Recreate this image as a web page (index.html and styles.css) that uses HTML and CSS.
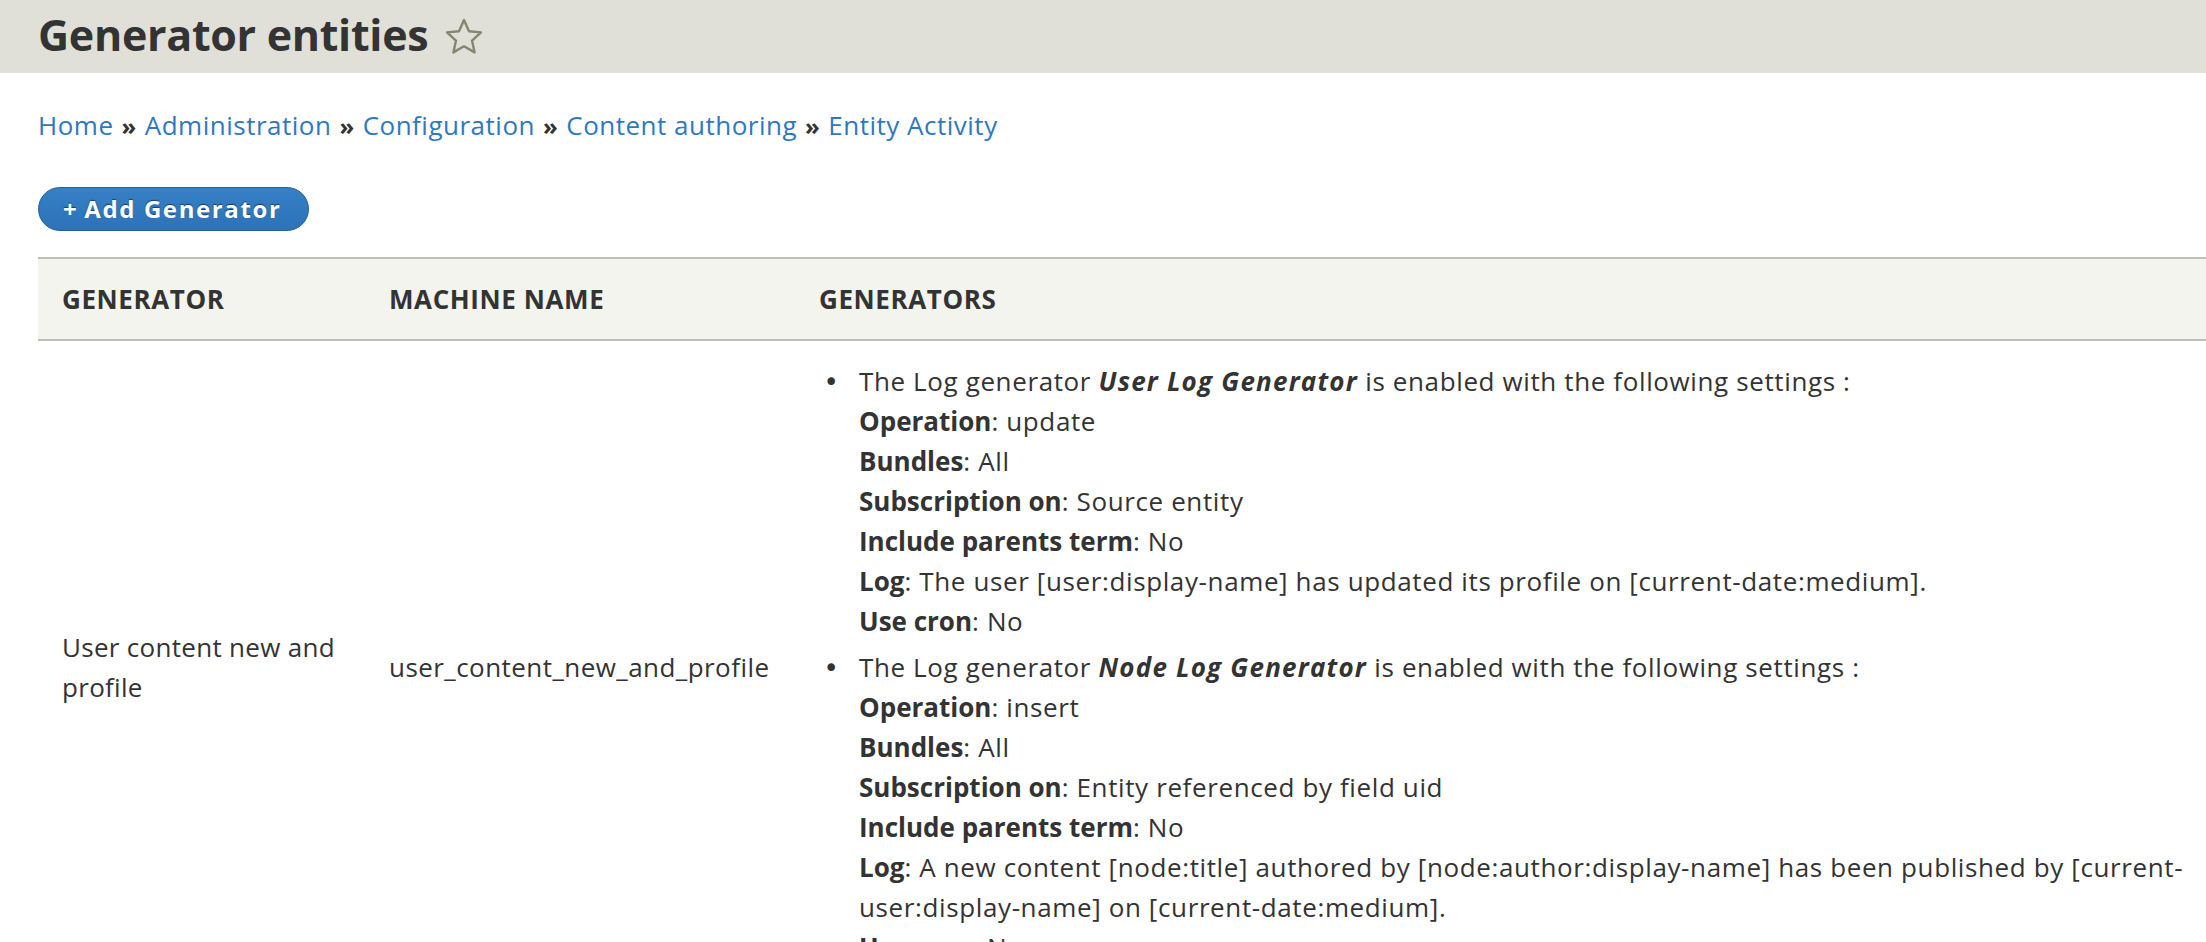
FILE: index.html
```html
<!DOCTYPE html>
<html lang="en">
<head>
<meta charset="utf-8">
<title>Generator entities</title>
<link rel="stylesheet" href="styles.css">
</head>
<body>
<header class="page-header">
  <h1 class="page-title">Generator entities
    <svg class="shortcut-star" viewBox="0 0 40 38" width="40" height="38" aria-hidden="true">
      <polygon points="20,3 25,14.2 37,15.4 28,23.6 30.6,35.4 20,29.3 9.4,35.4 12,23.6 3,15.4 15,14.2" fill="none" stroke="#86866f" stroke-width="2.4" stroke-linejoin="round"/>
    </svg>
  </h1>
</header>
<main class="content">
  <nav class="breadcrumb">
    <a href="#">Home</a><span class="sep">»</span><a href="#">Administration</a><span class="sep">»</span><a href="#">Configuration</a><span class="sep">»</span><a href="#">Content authoring</a><span class="sep">»</span><a href="#">Entity Activity</a>
  </nav>
  <div class="actions">
    <a class="button button-primary" href="#"><span class="plus">+</span>Add Generator</a>
  </div>
  <table class="listing">
    <colgroup>
      <col class="col-name">
      <col class="col-machine">
      <col class="col-gen">
    </colgroup>
    <thead>
      <tr>
        <th>Generator</th>
        <th>Machine name</th>
        <th>Generators</th>
      </tr>
    </thead>
    <tbody>
      <tr>
        <td class="cell-name">User content new and profile</td>
        <td class="cell-machine">user_content_new_and_profile</td>
        <td>
          <ul class="gen-list">
            <li>The Log generator <em class="gen-name">User Log Generator</em> is enabled with the following settings :<br>
              <strong>Operation</strong>: update<br>
              <strong>Bundles</strong>: All<br>
              <strong>Subscription on</strong>: Source entity<br>
              <strong>Include parents term</strong>: No<br>
              <strong>Log</strong>: The user [user:display-name] has updated its profile on [current-date:medium].<br>
              <strong>Use cron</strong>: No</li>
            <li>The Log generator <em class="gen-name">Node Log Generator</em> is enabled with the following settings :<br>
              <strong>Operation</strong>: insert<br>
              <strong>Bundles</strong>: All<br>
              <strong>Subscription on</strong>: Entity referenced by field uid<br>
              <strong>Include parents term</strong>: No<br>
              <strong>Log</strong>: A new content [node:title] authored by [node:author:display-name] has been published by [current-user:display-name] on [current-date:medium].<br>
              <strong>Use cron</strong>: No</li>
          </ul>
        </td>
      </tr>
    </tbody>
  </table>
</main>
</body>
</html>
```

FILE: styles.css
```css
html, body {
  overflow: hidden;
}
body {
  margin: 0;
  background: #ffffff;
  color: #333333;
  font-family: "Open Sans", "DejaVu Sans", sans-serif;
  font-size: 26px;
  line-height: 40px;
  letter-spacing: 0.62px;
}
.page-header {
  background: #e0e0d8;
  height: 73px;
  padding: 0 38px;
  box-sizing: border-box;
}
.page-title {
  margin: 0;
  font-size: 43px;
  line-height: 70px;
  font-weight: 700;
  letter-spacing: -0.3px;
  color: #333333;
  display: flex;
  align-items: center;
  gap: 16px;
}
.shortcut-star {
  display: block;
  margin-top: 1px;
}
.content {
  padding: 0 0 0 38px;
}
.breadcrumb {
  margin-top: 32px;
  color: #333333;
  letter-spacing: 0.5px;
}
.breadcrumb a {
  color: #2f78c1;
  text-decoration: none;
}
.breadcrumb .sep {
  padding: 0 8px;
  font-weight: 700;
  font-size: 24px;
}
.actions {
  margin-top: 41px;
}
.button {
  display: inline-block;
  box-sizing: border-box;
  height: 44px;
  line-height: 42px;
  padding: 0 27px 0 24px;
  border: 1px solid #255f98;
  border-radius: 22px;
  background: linear-gradient(#3680c6, #2c72b9);
  color: #ffffff;
  font-size: 24px;
  font-weight: 700;
  letter-spacing: 1.6px;
  text-decoration: none;
  text-shadow: 0 -1px 1px rgba(0, 0, 0, 0.5);
}
.button .plus {
  padding-right: 6px;
  font-weight: 700;
}
.listing {
  margin-top: 26px;
  width: 100%;
  border-collapse: collapse;
  table-layout: fixed;
}
.col-name { width: 327px; }
.col-machine { width: 430px; }
.listing thead tr {
  background: #f3f4ee;
  border-top: 2px solid #bfbfba;
  border-bottom: 2px solid #bfbfba;
}
.listing th {
  height: 80px;
  padding: 0 24px;
  text-align: left;
  text-transform: uppercase;
  font-weight: 700;
  letter-spacing: 0.6px;
  color: #333333;
}
.listing td {
  padding: 20px 24px;
  vertical-align: middle;
}
.listing td:last-child {
  padding-right: 16px;
}
.cell-name {
  letter-spacing: 0.3px;
}
.cell-machine {
  letter-spacing: 0.45px;
}
.gen-list {
  margin: 0;
  padding-left: 40px;
}
.gen-list li {
  margin-bottom: 6px;
}
.gen-list li::marker {
  content: "\2022\2002\2009";
  font-family: "DejaVu Sans", sans-serif;
  font-size: 26px;
}
.gen-list strong {
  letter-spacing: 0;
}
.gen-name {
  font-weight: 700;
  font-style: italic;
  letter-spacing: 1.2px;
}
```
